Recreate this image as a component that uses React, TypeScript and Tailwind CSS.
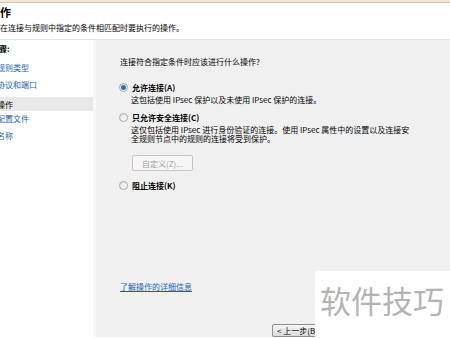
import React from "react";

const font = { fontFamily: '"Noto Sans CJK SC", "Liberation Sans", sans-serif' };

function Radio({ checked }: { checked?: boolean }) {
  return (
    <span className="relative inline-flex h-[9px] w-[9px] shrink-0 items-center justify-center rounded-full border border-[#a8a8a8] bg-gradient-to-br from-[#e0e0e0] to-white">
      {checked && <span className="h-[5px] w-[5px] rounded-full bg-[#2a6fc9]" />}
    </span>
  );
}

const steps = [
  { label: "规则类型", active: false },
  { label: "协议和端口", active: false },
  { label: "操作", active: true },
  { label: "配置文件", active: false },
  { label: "名称", active: false },
];

export default function App() {
  return (
    <div className="relative h-[338px] w-[450px] overflow-hidden bg-white text-[8px] leading-[9px] text-black" style={font}>
      {/* top strip */}
      <div className="h-[3px] border-b border-[#cfc6b0] bg-[#efe8d8]" />

      {/* header */}
      <div className="h-[37px] overflow-hidden whitespace-nowrap border-b border-[#e4e4e4] bg-white pt-[3px]">
        <div className="-ml-[11px] text-[11px] font-bold leading-[13px]">操作</div>
        <div className="-ml-[16px] mt-[4px]">指定在连接与规则中指定的条件相匹配时要执行的操作。</div>
      </div>

      <div className="flex h-[297px]">
        {/* steps */}
        <div className="w-[93px] shrink-0 overflow-hidden whitespace-nowrap bg-white pt-[4px]">
          <div className="-ml-[9px] font-bold">步骤:</div>
          <div className="mt-[9px] flex flex-col">
            {steps.map((s) =>
              s.active ? (
                <div key={s.label} className="-ml-[3px] mt-[1px] mb-[2px] h-[14px] bg-[#e8e8e8] pt-[3px]">
                  {s.label}
                </div>
              ) : (
                <div key={s.label} className="-ml-[3px] h-[17px] pt-[1px] text-[#1c5fb0]">
                  {s.label}
                </div>
              )
            )}
          </div>
        </div>
        <div className="w-[3px] shrink-0 bg-[#f7f7f7]" />

        {/* content */}
        <div className="flex flex-1 flex-col whitespace-nowrap bg-[#f0f0f0] pl-[23px] pt-[17px]">
          <div className="pl-[1px]">连接符合指定条件时应该进行什么操作?</div>

          <div className="mt-[17px] flex flex-col">
            <div className="flex items-center gap-[4px]">
              <Radio checked />
              <span className="font-bold">允许连接(A)</span>
            </div>
            <div className="ml-[12px] mt-[3px]">这包括使用 IPsec 保护以及未使用 IPsec 保护的连接。</div>

            <div className="mt-[9px] flex items-center gap-[4px]">
              <Radio />
              <span className="font-bold">只允许安全连接(C)</span>
            </div>
            <div className="ml-[12px] mt-[3px]">
              这仅包括使用 IPsec 进行身份验证的连接。使用 IPsec 属性中的设置以及连接安
              <br />
              全规则节点中的规则的连接将受到保护。
            </div>
            <div className="ml-[13px] mt-[12px] flex h-[16px] w-[61px] items-center justify-center rounded-[2px] border border-[#c4c4c4] bg-[#f6f6f6] text-[#a0a0a0]">
              自定义(Z)...
            </div>

            <div className="mt-[10px] flex items-center gap-[4px]">
              <Radio />
              <span className="font-bold">阻止连接(K)</span>
            </div>
          </div>

          <div className="mt-[92px] pl-[1px] text-[#1c5fb0] underline">了解操作的详细信息</div>

          <div className="ml-[153px] mt-[33px] flex h-[15px] w-[60px] items-center rounded-[2px] border border-[#8e8e8e] bg-gradient-to-b from-[#f6f6f6] to-[#dcdcdc] pl-[4px]">
            &lt; 上一步(B)
          </div>
        </div>
      </div>

      {/* watermark */}
      <div className="absolute left-[315px] top-[271px] flex h-[67px] w-[135px] items-start bg-white pl-[5px] pt-[9px]">
        <span className="text-[31px] leading-[40px] text-[#b4b4b4]">软件技巧</span>
      </div>
    </div>
  );
}
